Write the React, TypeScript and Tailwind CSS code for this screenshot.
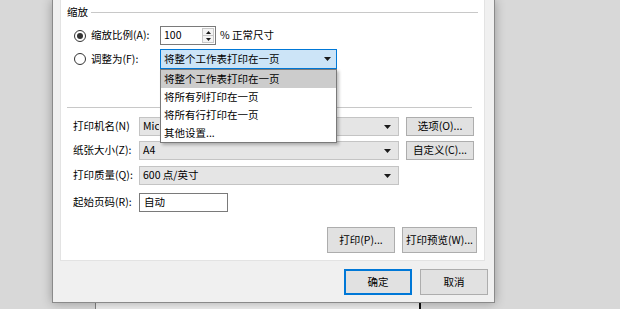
import React from 'react';

const LABEL_FONT = "font-['Noto_Sans_CJK_SC','Noto_Sans',sans-serif]";

function Arrow() {
  return (
    <svg width="7" height="4" viewBox="0 0 7 4" className="shrink-0">
      <polygon points="0,0 7,0 3.5,4" fill="#1a1a1a" />
    </svg>
  );
}

function Radio({ checked }: { checked?: boolean }) {
  return (
    <span className="w-[12px] h-[12px] rounded-full border border-[#333] bg-white flex items-center justify-center shrink-0">
      {checked && <span className="w-[6px] h-[6px] rounded-full bg-[#333]" />}
    </span>
  );
}

function GrayCombo({ value, clip }: { value: string; clip?: boolean }) {
  return (
    <div className="w-[260px] h-[19px] bg-[#e5e5e5] border border-[#c4c4c4] flex items-center justify-between pl-[3px] pr-[7px] overflow-hidden whitespace-nowrap">
      {/* the open list covers most of this value, only its start shows */}
      <span className={clip ? 'w-[16px] overflow-hidden' : ''}>{value}</span>
      <Arrow />
    </div>
  );
}

function Btn({ label, w, h, primary }: { label: string; w: string; h: string; primary?: boolean }) {
  return (
    <div
      className={`${w} ${h} flex items-center justify-center bg-[#e1e1e1] ${
        primary ? 'border-2 border-[#0078d7]' : 'border border-[#adadad]'
      }`}
    >
      {label}
    </div>
  );
}

const POPUP = ['将整个工作表打印在一页', '将所有列打印在一页', '将所有行打印在一页', '其他设置...'];

export default function App() {
  return (
    <div className={`relative w-[620px] h-[309px] overflow-hidden bg-[#d8d8d8] text-[10.5px] leading-none text-black ${LABEL_FONT}`}>
      {/* parent window behind the dialog */}
      <div className="absolute left-[95px] top-0 w-[326px] h-[309px] bg-[#eeeeee] border-l border-[#808080] border-r-2 border-r-[#111]" />

      {/* dialog */}
      <div className="absolute left-[52px] top-0 w-[443px] h-[303px] bg-[#f0f0f0] border-x border-b border-[#8a8a8a] shadow-[0_0_10px_rgba(0,0,0,0.3)] flex flex-col">
        {/* white panel */}
        <div className="relative ml-[7px] mr-[8px] w-[425px] h-[261px] bg-white border-x border-b border-[#e3e3e3] flex flex-col">
          {/* group heading */}
          <div className="h-[24px] flex items-center gap-[3px] pl-[6px] pr-[6px]">
            <span>缩放</span>
            <div className="flex-1 h-px bg-[#c8c8c8]" />
          </div>

          {/* scale radio */}
          <div className="mt-[2px] h-[19px] flex items-center pl-[13px]">
            <Radio checked />
            <span className="ml-[5px] w-[69px]">缩放比例(A):</span>
            <div className="w-[56px] h-[19px] border border-[#7a7a7a] bg-white flex items-center justify-between pl-[3px] pr-px">
              <span>100</span>
              <div className="w-[12px] h-[15px] border border-[#c8c8c8] bg-[#f4f4f4] flex flex-col">
                <div className="flex-1 flex items-center justify-center border-b border-[#c8c8c8]">
                  <svg width="5" height="3" viewBox="0 0 5 3"><polygon points="0,3 5,3 2.5,0" fill="#1a1a1a" /></svg>
                </div>
                <div className="flex-1 flex items-center justify-center">
                  <svg width="5" height="3" viewBox="0 0 5 3"><polygon points="0,0 5,0 2.5,3" fill="#1a1a1a" /></svg>
                </div>
              </div>
            </div>
            <span className="ml-[4px]">% 正常尺寸</span>
          </div>

          {/* fit radio */}
          <div className="mt-[4px] h-[20px] flex items-center pl-[13px]">
            <Radio />
            <span className="ml-[5px] w-[69px]">调整为(F):</span>
            <div className="w-[177px] h-[20px] border border-[#0078d7] bg-[#cce4f7] flex items-center justify-between pl-[3px] pr-[5px]">
              <span>将整个工作表打印在一页</span>
              <Arrow />
            </div>
          </div>

          <div className="mt-[38px] mx-[6px] mr-[12px] h-px bg-[#c8c8c8]" />

          {/* printer settings */}
          <div className="mt-[9px] h-[19px] flex items-center pl-[12px]">
            <span className="w-[66px]">打印机名(N)</span>
            <GrayCombo value="Microsoft Print to PDF" clip />
            <div className="ml-[7px]">
              <Btn label="选项(O)..." w="w-[68px]" h="h-[19px]" />
            </div>
          </div>
          <div className="mt-[5px] h-[19px] flex items-center pl-[12px]">
            <span className="w-[66px]">纸张大小(Z):</span>
            <GrayCombo value="A4" />
            <div className="ml-[7px]">
              <Btn label="自定义(C)..." w="w-[68px]" h="h-[19px]" />
            </div>
          </div>
          <div className="mt-[6px] h-[19px] flex items-center pl-[12px]">
            <span className="w-[66px]">打印质量(Q):</span>
            <GrayCombo value="600 点/英寸" />
          </div>
          <div className="mt-[8px] h-[19px] flex items-center pl-[12px]">
            <span className="w-[66px]">起始页码(R):</span>
            <div className="w-[89px] h-[19px] border border-[#7a7a7a] bg-white flex items-center pl-[4px]">自动</div>
          </div>

          <div className="mt-[15px] flex justify-end gap-[7px] pr-[7px]">
            <Btn label="打印(P)..." w="w-[68px]" h="h-[26px]" />
            <Btn label="打印预览(W)..." w="w-[75px]" h="h-[26px]" />
          </div>

          {/* open dropdown list */}
          <div className="absolute left-[99px] top-[69px] w-[177px] border border-[#7a7a7a] bg-white shadow-[2px_2px_3px_rgba(0,0,0,0.25)] flex flex-col">
            {POPUP.map((item, i) => (
              <div key={item} className={`h-[18px] flex items-center pl-[3px] ${i === 0 ? 'bg-[#cccccc]' : ''}`}>
                {item}
              </div>
            ))}
          </div>
        </div>

        <div className="mt-[8px] flex justify-end gap-[8px] pr-[6px]">
          <Btn label="确定" w="w-[68px]" h="h-[26px]" primary />
          <Btn label="取消" w="w-[68px]" h="h-[26px]" />
        </div>
      </div>
    </div>
  );
}
